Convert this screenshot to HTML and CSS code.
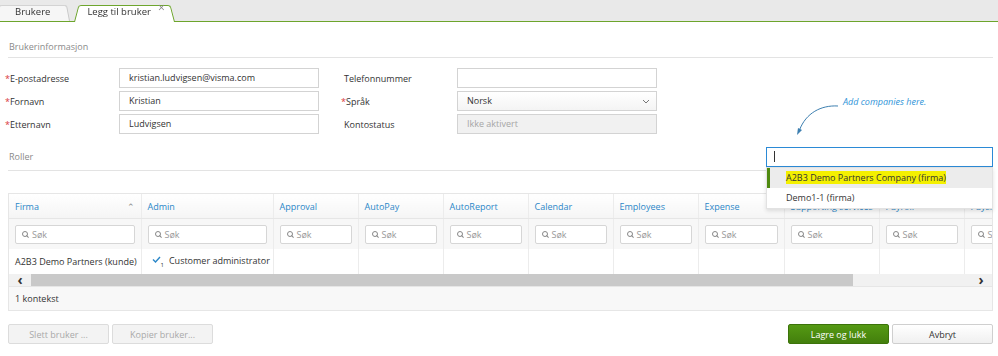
FILE: index.html
```html
<!DOCTYPE html>
<html lang="no">

<head>
    <meta charset="UTF-8">
    <meta name="viewport" content="width=device-width, initial-scale=1.0">
    <title>Legg til bruker</title>

    <link rel="stylesheet" href="styles.css">
</head>

<body>
    <div class="tabs">
        <div class="tab">Brukere</div>
        <div class="tab active">Legg til bruker <span class="close">&times;</span></div>
    </div>

    <div class="page">
        <h3 class="section-title">Brukerinformasjon</h3>

        <div class="form">
            <label class="req">E-postadresse</label>
            <div class="input">kristian.ludvigsen@visma.com</div>
            <span></span>
            <label>Telefonnummer</label>
            <div class="input"></div>

            <label class="req">Fornavn</label>
            <div class="input">Kristian</div>
            <span></span>
            <label class="req">Språk</label>
            <div class="input select">Norsk
                <svg width="8" height="5" viewBox="0 0 8 5"><path d="M1 1l3 3 3-3" fill="none" stroke="#777" stroke-width="1"/></svg>
            </div>

            <label class="req">Etternavn</label>
            <div class="input">Ludvigsen</div>
            <span></span>
            <label>Kontostatus</label>
            <div class="input disabled">Ikke aktivert</div>
        </div>

        <div class="roles-head">
            <h3 class="section-title plain">Roller</h3>
            <div class="company-search">
                <div class="search-box"><span class="caret"></span></div>
                <ul class="dropdown">
                    <li class="selected"><mark>A2B3 Demo Partners Company (firma)</mark></li>
                    <li>Demo1-1 (firma)</li>
                </ul>
                <div class="hint">
                    <svg width="46" height="32" viewBox="0 0 46 32">
                        <path d="M43 2C26 1 11 9 4.5 26" fill="none" stroke="#3d7fb0" stroke-width="1"/>
                        <path d="M2 31l1-7 4 2z" fill="#3d7fb0"/>
                    </svg>
                    <span>Add companies here.</span>
                </div>
            </div>
        </div>

        <div class="grid">
            <div class="grid-scroll">
                <table>
                    <colgroup>
                        <col style="width: 132px">
                        <col style="width: 132px">
                        <col style="width: 85px">
                        <col style="width: 85px">
                        <col style="width: 85px">
                        <col style="width: 85px">
                        <col style="width: 85px">
                        <col style="width: 86px">
                        <col style="width: 95px">
                        <col style="width: 85px">
                        <col style="width: 85px">
                    </colgroup>
                    <thead>
                        <tr class="head">
                            <th>Firma <span class="sort">&#8963;</span></th>
                            <th>Admin</th>
                            <th>Approval</th>
                            <th>AutoPay</th>
                            <th>AutoReport</th>
                            <th>Calendar</th>
                            <th>Employees</th>
                            <th>Expense</th>
                            <th>Supporting services</th>
                            <th>Payroll</th>
                            <th>Payslip</th>
                        </tr>
                        <tr class="filters">
                            <td><div class="filter">Søk</div></td>
                            <td><div class="filter">Søk</div></td>
                            <td><div class="filter">Søk</div></td>
                            <td><div class="filter">Søk</div></td>
                            <td><div class="filter">Søk</div></td>
                            <td><div class="filter">Søk</div></td>
                            <td><div class="filter">Søk</div></td>
                            <td><div class="filter">Søk</div></td>
                            <td><div class="filter">Søk</div></td>
                            <td><div class="filter">Søk</div></td>
                            <td><div class="filter">Søk</div></td>
                        </tr>
                    </thead>
                    <tbody>
                        <tr class="row">
                            <td>A2B3 Demo Partners (kunde)</td>
                            <td>
                                <span class="check">
                                    <svg width="9" height="7" viewBox="0 0 9 7"><path d="M1 3.5l2.5 2.5L8 1" fill="none" stroke="#2b87c8" stroke-width="1.4"/></svg><sub>1</sub>
                                </span>Customer administrator
                            </td>
                            <td></td><td></td><td></td><td></td><td></td><td></td><td></td><td></td><td></td>
                        </tr>
                    </tbody>
                </table>
            </div>
            <div class="scrollbar">
                <span class="arrow">&lsaquo;</span>
                <div class="track"><div class="thumb"></div></div>
                <span class="arrow">&rsaquo;</span>
            </div>
            <div class="grid-footer">1 kontekst</div>
        </div>

        <div class="actions">
            <div class="left">
                <button class="btn" disabled>Slett bruker ...</button>
                <button class="btn" disabled>Kopier bruker...</button>
            </div>
            <div class="right">
                <button class="btn primary">Lagre og lukk</button>
                <button class="btn">Avbryt</button>
            </div>
        </div>
    </div>
</body>
</html>
```

FILE: styles.css
```css
body {
    font-family: "Open Sans", Arial, sans-serif;
    font-size: 9px;
    color: #333;
    margin: 0;
    background: #fff;
}

/* tabs */
.tabs {
    position: relative;
    z-index: 0;
    display: flex;
    align-items: flex-end;
    height: 21px;
    background: #e9e9e9;
    border-bottom: 1px solid #6da52c;
}

.tab {
    position: relative;
    height: 18px;
    line-height: 18px;
    padding: 0 20px 0 19px;
    margin-left: -4px;
    font-size: 9.5px;
    color: #333;
}

.tab::before {
    content: '';
    position: absolute;
    inset: 0;
    background: #f6f6f6;
    border: 1px solid #c9c9c9;
    border-bottom: none;
    border-radius: 3px 3px 0 0;
    transform: perspective(40px) rotateX(12deg);
    transform-origin: bottom;
    z-index: -1;
}

.tab.active {
    margin-left: 4px;
    margin-bottom: -1px;
    height: 19px;
    padding: 0 25px 0 13px;
}

.tab.active::before {
    background: #fff;
    border-color: #6da52c;
}

.tab .close {
    position: absolute;
    right: 11px;
    top: 0;
    font-size: 12px;
    line-height: 10px;
    color: #888;
}

/* page */
.page {
    padding: 0 5px 0 8px;
}

.section-title {
    margin: 0;
    padding: 18px 1px 3px;
    font-size: 9px;
    font-weight: normal;
    line-height: 14px;
    color: #8a8a8a;
    border-bottom: 1px solid #e3e3e3;
}

.section-title.plain {
    padding: 0 1px;
    border: none;
}

.form {
    display: grid;
    grid-template-columns: 114px 200px 22px 116px 200px;
    grid-auto-rows: 20px;
    row-gap: 3px;
    align-items: center;
    margin: 10px 0 0 -3px;
}

.form label {
    padding-left: 3px;
}

.form label.req {
    padding-left: 0;
}

.form label.req::before {
    content: '*';
    color: #d9383a;
}

.input {
    box-sizing: border-box;
    height: 20px;
    line-height: 18px;
    padding: 0 9px;
    border: 1px solid #d3d3d3;
    background: #fff;
}

.input.select {
    display: flex;
    justify-content: space-between;
    align-items: center;
    background: linear-gradient(#fff, #f4f4f4);
    padding-right: 6px;
}

.input.disabled {
    background: #f1f1f1;
    color: #a6a6a6;
}

/* roles header with company search */
.roles-head {
    display: flex;
    justify-content: space-between;
    align-items: center;
    padding: 13px 0 3px;
    border-bottom: 1px solid #e3e3e3;
}

.company-search {
    position: relative;
    width: 227px;
}

.search-box {
    box-sizing: border-box;
    height: 20px;
    border: 1.5px solid #2b8ad6;
    background: #fff;
    padding: 3px 7px;
}

.caret {
    display: block;
    width: 1px;
    height: 11px;
    background: #333;
}

.dropdown {
    position: absolute;
    z-index: 5;
    left: 0;
    top: 20px;
    width: 227px;
    margin: 0;
    padding: 0;
    list-style: none;
    background: #fff;
    border: 1px solid #e2e2e2;
    box-sizing: border-box;
    box-shadow: 0 2px 4px rgba(0, 0, 0, 0.12);
}

.dropdown li {
    height: 20px;
    line-height: 20px;
    padding-left: 19px;
}

.dropdown li.selected {
    background: #ececec;
    box-shadow: inset 3px 0 #4f8a10;
}

.dropdown mark {
    background: #f4f000;
    color: #333;
}

.hint {
    position: absolute;
    left: 29px;
    top: -52px;
    width: 140px;
    height: 45px;
}

.hint svg {
    position: absolute;
    left: 0;
    top: 9px;
}

.hint span {
    position: absolute;
    left: 48px;
    top: 0;
    line-height: 14px;
    white-space: nowrap;
    font-style: italic;
    color: #2e93d8;
}

/* grid */
.grid {
    margin-top: 22px;
    border: 1px solid #e6e6e6;
}

.grid-scroll {
    overflow: hidden;
}

table {
    table-layout: fixed;
    width: 1040px;
    border-collapse: collapse;
}

th,
td {
    border-left: 1px solid #ececec;
    padding: 0 6px;
    text-align: left;
    white-space: nowrap;
    overflow: hidden;
}

th:first-child,
td:first-child {
    border-left: none;
}

.head th {
    height: 24px;
    font-weight: normal;
    color: #2b87c8;
    background: linear-gradient(#fff, #f5f5f5);
    border-bottom: 1px solid #e6e6e6;
}

.sort {
    float: right;
    color: #888;
    font-size: 9px;
}

.filters td {
    height: 30px;
    background: #f7f7f7;
}

.filter {
    box-sizing: border-box;
    height: 19px;
    line-height: 17px;
    border: 1px solid #d6d6d6;
    border-radius: 2px;
    background: #fff;
    color: #999;
    padding-left: 16px;
    position: relative;
}

.filter::before {
    content: '';
    position: absolute;
    left: 6px;
    top: 5px;
    width: 4px;
    height: 4px;
    border: 1px solid #888;
    border-radius: 50%;
}

.filter::after {
    content: '';
    position: absolute;
    left: 10px;
    top: 10px;
    width: 3px;
    height: 1px;
    background: #888;
    transform: rotate(45deg);
}

.row td {
    height: 25px;
}

.check {
    display: inline-flex;
    align-items: flex-start;
    margin: 0 5px 0 4px;
    vertical-align: middle;
}

.check sub {
    font-size: 6px;
    margin-top: 5px;
}

.scrollbar {
    display: flex;
    align-items: center;
    height: 12px;
    background: #f1f1f1;
}

.arrow {
    width: 22px;
    text-align: center;
    font-size: 14px;
    font-weight: bold;
    line-height: 12px;
    color: #333;
}

.track {
    flex: 1;
    height: 12px;
}

.thumb {
    width: 822px;
    height: 100%;
    background: #c9c9c9;
}

.grid-footer {
    height: 23px;
    line-height: 23px;
    padding-left: 6px;
    background: #f8f8f8;
    border-top: 1px solid #e6e6e6;
}

/* buttons */
.actions {
    display: flex;
    justify-content: space-between;
    margin-top: 13px;
}

.actions .left,
.actions .right {
    display: flex;
    gap: 3px;
}

.btn {
    width: 101px;
    height: 20px;
    font-family: inherit;
    font-size: 9px;
    color: #333;
    border: 1px solid #cfcfcf;
    border-radius: 2px;
    background: linear-gradient(#fff, #f0f0f0);
    padding: 0;
}

.btn:disabled {
    background: #f3f3f3;
    border-color: #dcdcdc;
    color: #a9a9a9;
}

.btn.primary {
    background: linear-gradient(#559a14, #437f0c);
    border-color: #3c730a;
    color: #fff;
}
```
